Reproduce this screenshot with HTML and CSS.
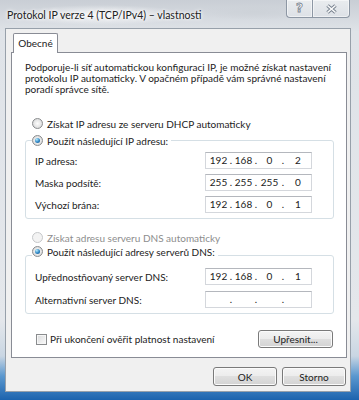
FILE: index.html
```html
<!DOCTYPE html>
<html lang="cs">
  <head>
    <meta charset="UTF-8">
    <meta name="viewport" content="width=device-width">
    <title>Protokol IP verze 4 (TCP/IPv4) – vlastnosti</title>
    <link rel="stylesheet" href="styles.css">
  </head>
  <body>
    <div class="win">
      <div class="cap">
        <span class="ttl">Protokol IP verze 4 (TCP/IPv4) – vlastnosti</span>
        <div class="cb">
          <span class="hlp">?</span>
          <span class="cls"><svg width="13" height="10" viewBox="0 0 13 10">
            <path d="M2.5 1.5 10.5 8.5M10.5 1.5 2.5 8.5" stroke="#7a8491" stroke-width="3.6"/>
            <path d="M2.5 1.5 10.5 8.5M10.5 1.5 2.5 8.5" stroke="#fbfbfb" stroke-width="1.6"/>
          </svg></span>
        </div>
      </div>
      <div class="cl">
        <div class="tabs"><span class="tab">Obecné</span></div>
        <div class="pn">
          <p class="txt">Podporuje-li síť automatickou konfiguraci IP, je možné získat nastavení<br>protokolu IP automaticky. V opačném případě vám správné nastavení<br>poradí správce sítě.</p>
          <label class="opt o1"><span class="rd"></span>Získat IP adresu ze serveru DHCP automaticky</label>
          <div class="grp g1">
            <label class="opt lg"><span class="rd on"></span>Použít následující IP adresu:</label>
            <div class="row"><span>IP adresa:</span>
              <span class="ip"><i>192</i><b>.</b><i>168</i><b>.</b><i>0</i><b>.</b><i>2</i></span></div>
            <div class="row"><span>Maska podsítě:</span>
              <span class="ip"><i>255</i><b>.</b><i>255</i><b>.</b><i>255</i><b>.</b><i>0</i></span></div>
            <div class="row"><span>Výchozí brána:</span>
              <span class="ip"><i>192</i><b>.</b><i>168</i><b>.</b><i>0</i><b>.</b><i>1</i></span></div>
          </div>
          <label class="opt o2 off"><span class="rd"></span>Získat adresu serveru DNS automaticky</label>
          <div class="grp g2">
            <label class="opt lg"><span class="rd on"></span>Použít následující adresy serverů DNS:</label>
            <div class="row"><span>Upřednostňovaný server DNS:</span>
              <span class="ip"><i>192</i><b>.</b><i>168</i><b>.</b><i>0</i><b>.</b><i>1</i></span></div>
            <div class="row"><span>Alternativní server DNS:</span>
              <span class="ip"><i></i><b>.</b><i></i><b>.</b><i></i><b>.</b><i></i></span></div>
          </div>
          <div class="chkrow">
            <label class="opt"><span class="chk"></span>Při ukončení ověřit platnost nastavení</label>
            <button class="b adv">Upřesnit...</button>
          </div>
        </div>
        <div class="btns">
          <button class="b">OK</button>
          <button class="b">Storno</button>
        </div>
      </div>
    </div>
  </body>
</html>
```

FILE: styles.css
```css
body {margin: 0; background: #fff; color: #222;
  font: 10px Lato, 'Liberation Sans', sans-serif;}
.win {width: 359px; height: 400px; box-sizing: border-box; overflow: hidden;
  padding: 0 8px 8px 5px;
  background: linear-gradient(#c9ced5, #dfe3e8 8%, #e4e7eb 80%, #c9d6e3 89%,
    #5b98cf 94%, #1c63ae);}

/* title bar */
.cap {height: 28px; display: flex; align-items: flex-start;
  background: radial-gradient(90px 10px at 95px 15px, #f7f8f9, #f7f8f900),
    radial-gradient(60px 8px at 250px 12px, #cdd2d8, #cdd2d800);}
.ttl {margin: 9px 0 0 2px; line-height: 12px; font-size: 10.5px;
  text-shadow: 0 0 5px #fff, 0 0 3px #fff;}
.cb {margin: 0 1px 0 auto; display: flex;}
.hlp, .cls {height: 18px; box-sizing: border-box; display: grid;
  place-items: center; border: 1px solid #8d97a4; border-top: 0;
  background: linear-gradient(#e9ecef, #dde1e6);
  box-shadow: inset 0 0 0 1px #ffffff80;}
.hlp {width: 26px; border-right: 0; border-radius: 0 0 0 4px;
  color: #fbfbfb; font: 700 12px 'DejaVu Sans', sans-serif;
  -webkit-text-stroke: .8px #7a8491; padding-bottom: 1px;}
.cls {width: 38px; border-radius: 0 0 4px 0;}

/* client area */
.cl {height: 364px; box-sizing: border-box; border: 1px solid #97a0aa;
  background: #f0f0f0; padding: 4px 3px 0 5px;}
.tabs {display: flex; padding-left: 2px;}
.tab {position: relative; z-index: 1; width: 45px; height: 20px;
  box-sizing: border-box; margin-bottom: -1px; text-align: center;
  line-height: 18px; background: #fff; border: 1px solid #898c95;
  border-bottom: 0; border-radius: 2px 2px 0 0;}
.pn {height: 306px; box-sizing: border-box; background: #fff;
  border: 1px solid #898c95; padding: 9px 12px 0 13px;}
.txt {margin: 0; line-height: 11px;}

/* options */
.opt {display: flex; align-items: center; gap: 4px; height: 13px;
  width: fit-content;}
.o1 {margin: 22px 0 0 7px;}
.o2 {margin: 12px 0 0 7px;}
.off {color: #8d8d8d;}
.rd {flex: none; width: 11px; height: 11px; box-sizing: border-box;
  border: 1px solid #8a8c8e; border-radius: 50%; display: grid;
  place-items: center;
  background: radial-gradient(#fdfdfd, #e8e8e8 50%, #c8cbce);}
.off .rd {border-color: #c6c8ca; background: #f3f3f3;}
.rd.on::after {content: ''; width: 5px; height: 5px; border-radius: 50%;
  background: radial-gradient(circle at 35% 30%, #b4ecff, #2f86c4 55%, #135089);}
.chk {flex: none; width: 11px; height: 11px; box-sizing: border-box;
  border: 1px solid #8a8c8e; box-shadow: inset 0 0 0 1px #f6f6f6;
  background: linear-gradient(135deg, #d9dadb, #fbfbfb);}

/* group boxes */
.grp {border: 1px solid #d5dfe5; border-radius: 3px; padding: 0 0 5px 9px;}
.g1 {margin-top: 10px;}
.g2 {margin-top: 11px;}
.lg {background: #fff; padding-right: 3px; margin-left: -3px;}
.g1 .lg {margin-top: -7px;}
.g2 .lg {margin-top: -11px;}
.row {display: grid; grid-template-columns: 170px 107px; align-items: center;
  height: 17px; margin-top: 5px;}
.g2 .row {margin-top: 6px;}
.g2 .lg + .row {margin-top: 10px;}
.ip {height: 17px; box-sizing: border-box; display: grid; padding-left: 2px;
  grid-template-columns: 21px 4px 21px 4px 23px 4px 1fr;
  line-height: 15px; text-align: center; background: #fff;
  border: 1px solid #d4d7dc; border-top-color: #b4b7bd;}
.ip i, .ip b {font-style: normal; font-weight: 400;}

/* buttons */
.chkrow {display: flex; align-items: center; height: 18px; margin-top: 16px;
  padding-left: 11px;}
.chkrow .opt {gap: 3px;}
.b {font: inherit; color: inherit; padding: 0; height: 19px;
  border: 1px solid #7a7a7a; border-radius: 3px;
  box-shadow: inset 0 0 0 1px #fbfbfb;
  background: linear-gradient(#f4f4f4, #ececec 50%, #dfdfdf 50%, #d3d3d3);}
.adv {width: 75px; height: 18px; margin: 0 1px 0 auto;}
.btns {display: flex; justify-content: flex-end; gap: 5px; margin-top: 9px;
  padding-right: 1px;}
.btns .b {width: 64px;}
```
